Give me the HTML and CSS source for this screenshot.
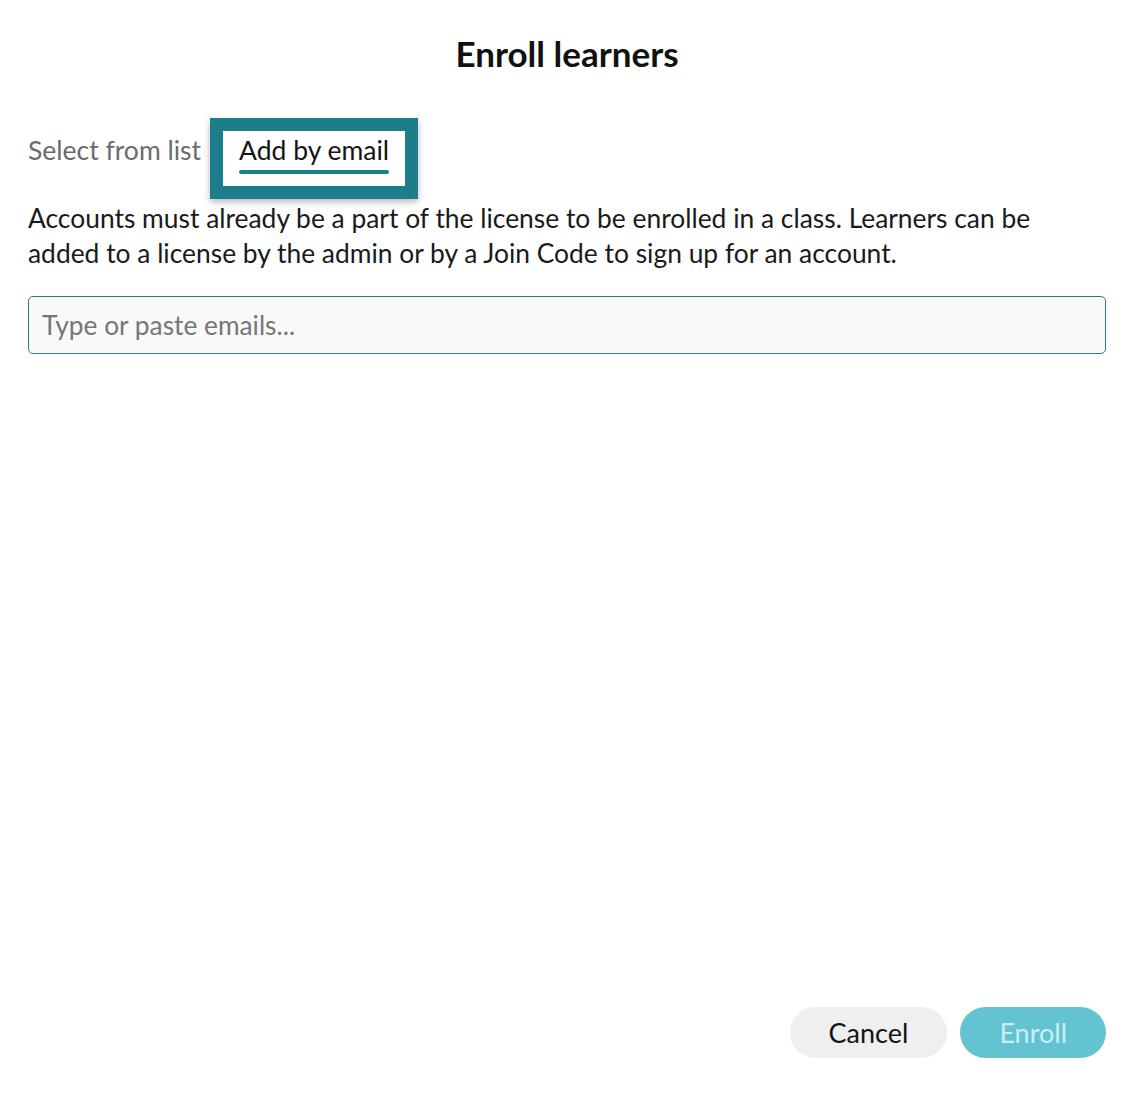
FILE: index.html
```html
<!DOCTYPE html>
<html lang="en">
<head>
<meta charset="utf-8">
<title>Enroll learners</title>
<link rel="stylesheet" href="styles.css">
</head>
<body>
<div class="dialog">
  <h1 class="title">Enroll learners</h1>
  <div class="tabs">
    <div class="tab">Select from list</div>
    <div class="tab tab-active"><span class="tab-label">Add by email</span><span class="tab-bar"></span></div>
  </div>
  <p class="desc">Accounts must already be a part of the license to be enrolled in a class. Learners can be added to a license by the admin or by a Join Code to sign up for an account.</p>
  <input class="email-input" type="text" placeholder="Type or paste emails...">
  <div class="footer">
    <button class="btn btn-cancel">Cancel</button>
    <button class="btn btn-enroll">Enroll</button>
  </div>
</div>
</body>
</html>
```

FILE: styles.css
```css
html, body {
  margin: 0;
  padding: 0;
  background: #ffffff;
}
body {
  font-family: Lato, "Open Sans", sans-serif;
  color: #1a1a1a;
}
.dialog {
  box-sizing: border-box;
  height: 1101px;
  padding: 0 36px 43px 28px;
  display: flex;
  flex-direction: column;
}
.title {
  margin: 32px 0 0;
  font-size: 35px;
  line-height: 42px;
  font-weight: 700;
  text-align: center;
  color: #111111;
}
.tabs {
  display: flex;
  align-items: flex-start;
  gap: 5px;
  margin: 57px 0 0 -17px;
}
.tab {
  padding: 4px 17px 0;
  font-size: 26.5px;
  line-height: 30px;
  color: #6b6b6b;
}
.tab-active {
  display: flex;
  flex-direction: column;
  padding: 4px 16px 12px;
  color: #141414;
  background: #fff;
  box-shadow: 0 0 0 13px #1b7e8a, 0 3px 7px 13px rgba(0, 0, 0, 0.28);
}
.tab-bar {
  display: block;
  height: 4px;
  margin-top: 5px;
  border-radius: 2px;
  background: #1b7e8a;
}
.desc {
  margin: 15px 0 0;
  padding-right: 4px;
  font-size: 26.4px;
  line-height: 35px;
  color: #1a1a1a;
}
.email-input {
  box-sizing: border-box;
  display: block;
  width: 100%;
  height: 58px;
  margin-top: 25px;
  padding: 0 13px;
  border: 1px solid #2a7d88;
  border-radius: 5px;
  background: #f9f9f9;
  font-family: Lato, "Open Sans", sans-serif;
  font-size: 26.3px;
  color: #1a1a1a;
  outline: none;
}
.email-input::placeholder {
  color: #767676;
}
.footer {
  margin-top: auto;
  display: flex;
  justify-content: flex-end;
  gap: 13px;
}
.btn {
  height: 51px;
  padding: 0 39px;
  border: none;
  border-radius: 26px;
  font-family: Lato, "Open Sans", sans-serif;
  font-size: 27px;
  cursor: pointer;
}
.btn-cancel {
  background: #efefef;
  color: #141414;
}
.btn-enroll {
  background: #64c3d0;
  color: #c9eff3;
}
```
